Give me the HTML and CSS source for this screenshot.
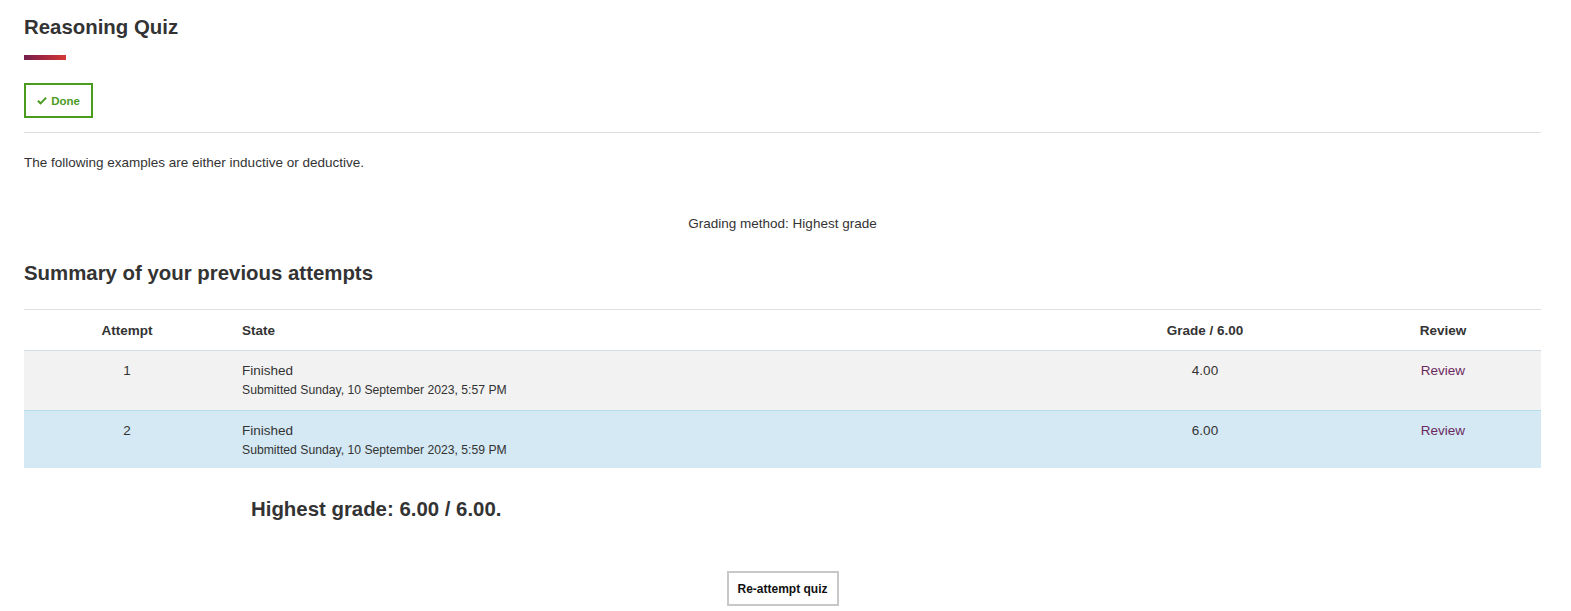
FILE: index.html
```html
<!DOCTYPE html>
<html>
<head>
<meta charset="utf-8">
<link rel="stylesheet" href="styles.css">
</head>
<body>
<div class="page">
  <h1 class="title">Reasoning Quiz</h1>
  <div class="title-bar"></div>
  <div class="completion">
    <span class="done-btn">
      <svg class="check" viewBox="0 0 12 10" width="10" height="9"><path d="M1 5.2 L4.3 8.4 L11 1.6" fill="none" stroke="currentColor" stroke-width="2.4"/></svg>
      Done
    </span>
  </div>
  <hr class="rule">
  <p class="intro">The following examples are either inductive or deductive.</p>
  <p class="grading">Grading method: Highest grade</p>
  <h2 class="summary">Summary of your previous attempts</h2>
  <table class="attempts">
    <colgroup>
      <col class="c-attempt"><col class="c-state"><col class="c-grade"><col class="c-review">
    </colgroup>
    <thead>
      <tr>
        <th class="center">Attempt</th>
        <th class="left">State</th>
        <th class="center">Grade / 6.00</th>
        <th class="center">Review</th>
      </tr>
    </thead>
    <tbody>
      <tr class="row-odd">
        <td class="center">1</td>
        <td class="left">Finished<span class="sub">Submitted Sunday, 10 September 2023, 5:57 PM</span></td>
        <td class="center">4.00</td>
        <td class="center"><a class="review" href="#">Review</a></td>
      </tr>
      <tr class="row-best">
        <td class="center">2</td>
        <td class="left">Finished<span class="sub">Submitted Sunday, 10 September 2023, 5:59 PM</span></td>
        <td class="center">6.00</td>
        <td class="center"><a class="review" href="#">Review</a></td>
      </tr>
    </tbody>
  </table>
  <h3 class="highest">Highest grade: 6.00 / 6.00.</h3>
  <div class="actions">
    <button class="reattempt">Re-attempt quiz</button>
  </div>
</div>
</body>
</html>
```
FILE: styles.css
```css
html, body {
  margin: 0;
  padding: 0;
  background: #fff;
}
body {
  font-family: "Liberation Sans", Arial, Helvetica, sans-serif;
  color: #333;
  font-size: 13.5px;
}
.page {
  padding: 0 30px 0 24px;
}
.title {
  margin: 0;
  padding-top: 15px;
  font-size: 20.4px;
  line-height: 24px;
  font-weight: bold;
  color: #333;
}
.title-bar {
  margin-top: 16px;
  width: 42px;
  height: 5px;
  background: linear-gradient(to right, #74204f, #a8283f 50%, #d33a36);
}
.completion {
  margin-top: 23px;
  display: flex;
}
.done-btn {
  display: inline-flex;
  align-items: center;
  gap: 4px;
  box-sizing: border-box;
  height: 35px;
  width: 69px;
  justify-content: center;
  border: 2px solid #4b9c1e;
  color: #4b9c1e;
  font-weight: bold;
  font-size: 11.5px;
}
.check {
  display: block;
}
.rule {
  margin: 14px 0 0 0;
  border: 0;
  border-top: 1px solid #dcdfe3;
  height: 0;
}
.intro {
  margin: 22px 0 0 0;
  line-height: 16px;
}
.grading {
  margin: 45px 0 0 0;
  text-align: center;
  line-height: 16px;
}
.summary {
  margin: 29px 0 0 0;
  font-size: 20.4px;
  line-height: 24px;
  font-weight: bold;
}
.attempts {
  margin-top: 24px;
  width: 100%;
  border-collapse: collapse;
  table-layout: fixed;
  border-top: 1px solid #dcdfe3;
}
.c-attempt { width: 206px; }
.c-grade { width: 280px; }
.c-review { width: 196px; }
.attempts th {
  font-size: 13.5px;
  font-weight: bold;
  height: 40px;
  padding: 0 12px;
  color: #333;
  border-bottom: 1px solid #d4dce3;
}
.attempts td {
  vertical-align: top;
  padding: 12px 12px 10px;
  line-height: 16px;
}
.center { text-align: center; }
.left { text-align: left; }
.sub {
  display: block;
  margin-top: 3px;
  font-size: 12.2px;
  line-height: 16px;
}
.row-odd td {
  background: #f2f2f2;
  height: 37px;
}
.row-best td {
  background: #d4e9f4;
  border-top: 1px solid #b3dfec;
  height: 35px;
}
.review {
  color: #6b2a5f;
  text-decoration: none;
}
.highest {
  margin: 29px 0 0 227px;
  font-size: 20.4px;
  line-height: 24px;
  font-weight: bold;
}
.actions {
  margin-top: 50px;
  display: flex;
  justify-content: center;
}
.reattempt {
  box-sizing: border-box;
  width: 112px;
  height: 35px;
  background: #fff;
  border: 2px solid #c8c8c8;
  font-family: "Liberation Sans", Arial, sans-serif;
  font-weight: bold;
  font-size: 12px;
  color: #111;
  padding: 0;
}
```
